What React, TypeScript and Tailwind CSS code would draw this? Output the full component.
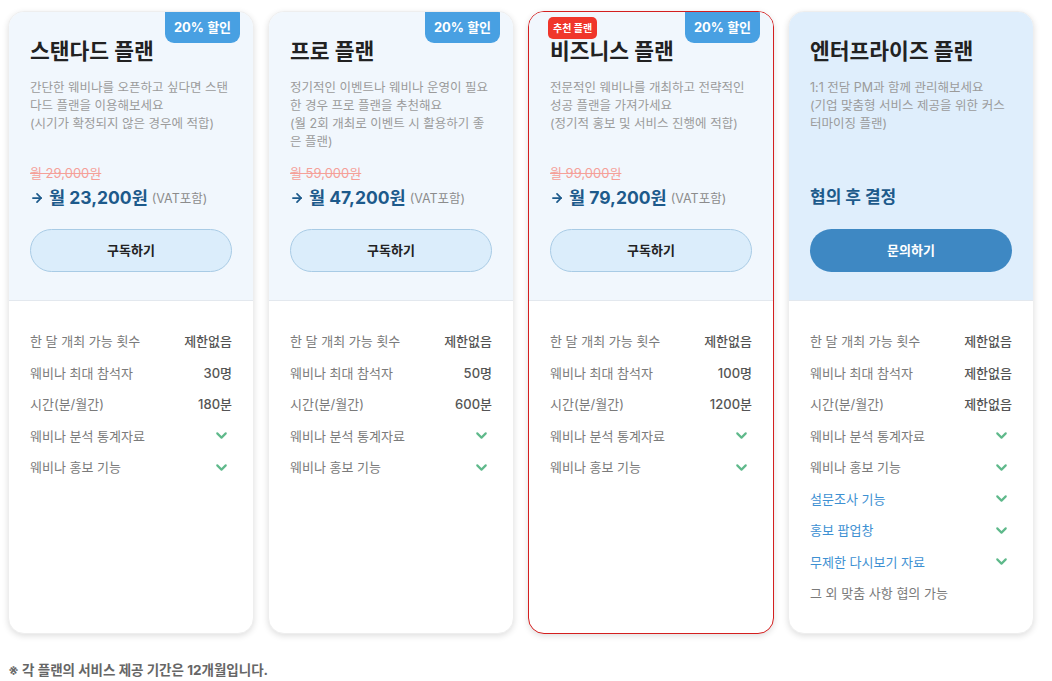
import { ChevronDown, ArrowRight } from "lucide-react";

interface Feature {
  label: string;
  value?: string;
  check?: boolean;
  blue?: boolean;
}

interface Plan {
  name: string;
  desc: string[];
  oldPrice?: string;
  price?: string;
  cta: string;
  recommended?: boolean;
  discount?: boolean;
  enterprise?: boolean;
  features: Feature[];
}

const base = (count: string, people: string, time: string): Feature[] => [
  { label: "한 달 개최 가능 횟수", value: count },
  { label: "웨비나 최대 참석자", value: people },
  { label: "시간(분/월간)", value: time },
  { label: "웨비나 분석 통계자료", check: true },
  { label: "웨비나 홍보 기능", check: true },
];

const plans: Plan[] = [
  {
    name: "스탠다드 플랜",
    desc: ["간단한 웨비나를 오픈하고 싶다면 스탠", "다드 플랜을 이용해보세요", "(시기가 확정되지 않은 경우에 적합)"],
    oldPrice: "월 29,000원",
    price: "월 23,200원",
    cta: "구독하기",
    discount: true,
    features: base("제한없음", "30명", "180분"),
  },
  {
    name: "프로 플랜",
    desc: ["정기적인 이벤트나 웨비나 운영이 필요", "한 경우 프로 플랜을 추천해요", "(월 2회 개최로 이벤트 시 활용하기 좋", "은 플랜)"],
    oldPrice: "월 59,000원",
    price: "월 47,200원",
    cta: "구독하기",
    discount: true,
    features: base("제한없음", "50명", "600분"),
  },
  {
    name: "비즈니스 플랜",
    desc: ["전문적인 웨비나를 개최하고 전략적인", "성공 플랜을 가져가세요", "(정기적 홍보 및 서비스 진행에 적합)"],
    oldPrice: "월 99,000원",
    price: "월 79,200원",
    cta: "구독하기",
    discount: true,
    recommended: true,
    features: base("제한없음", "100명", "1200분"),
  },
  {
    name: "엔터프라이즈 플랜",
    desc: ["1:1 전담 PM과 함께 관리해보세요", "(기업 맞춤형 서비스 제공을 위한 커스", "터마이징 플랜)"],
    cta: "문의하기",
    enterprise: true,
    features: [
      ...base("제한없음", "제한없음", "제한없음"),
      { label: "설문조사 기능", check: true, blue: true },
      { label: "홍보 팝업창", check: true, blue: true },
      { label: "무제한 다시보기 자료", check: true, blue: true },
      { label: "그 외 맞춤 사항 협의 가능" },
    ],
  },
];

function PlanCard({ plan }: { plan: Plan }) {
  return (
    <div
      className={`relative flex h-[623px] w-[246px] flex-col overflow-hidden rounded-[16px] bg-white shadow-[0_2px_6px_rgba(0,0,0,0.13)] ${
        plan.recommended ? "border border-[#d41f1f]" : "border border-[#eeeeee]"
      }`}
    >
      {plan.discount && (
        <div className="absolute right-[13px] top-0 flex h-[31px] w-[75px] items-center justify-center rounded-b-[9px] bg-[#48a0e2] text-[13px] font-bold text-white">
          20% 할인
        </div>
      )}
      {plan.recommended && (
        <div className="absolute left-[19px] top-[5px] flex h-[22px] items-center rounded-[5px] bg-[#f0362b] px-[5px] text-[10px] font-bold text-white">
          추천 플랜
        </div>
      )}
      <div
        className={`flex h-[289px] flex-col border-b border-[#e3e8ee] px-[21px] pt-[24px] ${
          plan.enterprise ? "bg-[#dfeefc]" : "bg-[#f1f7fd]"
        }`}
      >
        <h2 className="text-[21.5px] font-bold leading-[30px] text-[#222]">{plan.name}</h2>
        <div className="mt-[13px] h-[84px] text-[12.5px] leading-[18px] text-[#9b9b9b]">
          {plan.desc.map((d) => (
            <div key={d} className="whitespace-nowrap">
              {d}
            </div>
          ))}
        </div>
        <div className="h-[20px] text-[13px] leading-[20px] text-[#f5a099] line-through">{plan.oldPrice}</div>
        <div className="mt-[2px] flex h-[26px] items-center">
          {plan.enterprise ? (
            <span className="text-[17px] font-bold text-[#1d5a8b]">협의 후 결정</span>
          ) : (
            <>
              <ArrowRight size={14} strokeWidth={3} className="mr-[5px] text-[#1d5a8b]" />
              <span className="text-[17.5px] font-bold text-[#1d5a8b]">{plan.price}</span>
              <span className="ml-[4px] mt-[3px] text-[12.5px] text-[#8c8c8c]">(VAT포함)</span>
            </>
          )}
        </div>
        <button
          className={`mt-[18px] flex h-[43px] w-full items-center justify-center rounded-full text-[13px] font-semibold ${
            plan.enterprise
              ? "bg-[#3e88c3] text-white"
              : "border border-[#a8cbe5] bg-[#dbedfb] text-[#222]"
          }`}
        >
          {plan.cta}
        </button>
      </div>
      <div className="flex flex-col gap-[11.5px] px-[21px] pt-[30px]">
        {plan.features.map((f) => (
          <div key={f.label} className="flex h-[20px] items-center justify-between text-[13px] leading-[20px]">
            <span className={f.blue ? "text-[#3d90d2]" : "text-[#7a7a7a]"}>{f.label}</span>
            {f.value && <span className="font-medium text-[#555]">{f.value}</span>}
            {f.check && <ChevronDown size={17} strokeWidth={3} className="mr-[2px] text-[#5fb98b]" />}
          </div>
        ))}
      </div>
    </div>
  );
}

export default function App() {
  return (
    <div className="min-h-[681px] bg-white px-[8px] pt-[11px] font-['Inter','Noto_Sans_CJK_KR',sans-serif]">
      <div className="flex gap-[14px]">
        {plans.map((p) => (
          <PlanCard key={p.name} plan={p} />
        ))}
      </div>
      <p className="mt-[26px] text-[13.5px] font-bold text-[#666]">※ 각 플랜의 서비스 제공 기간은 12개월입니다.</p>
    </div>
  );
}
